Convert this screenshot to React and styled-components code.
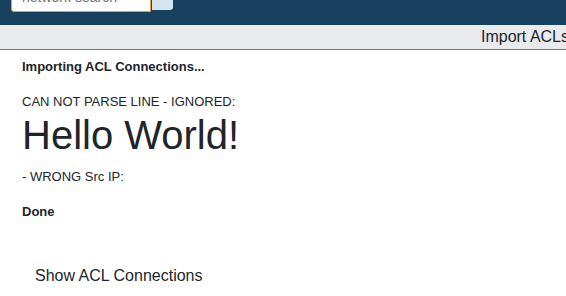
import React from 'react';
import styled, { createGlobalStyle } from 'styled-components';

const GlobalStyle = createGlobalStyle`
  html, body {
    margin: 0;
    padding: 0;
    background: #fff;
    overflow: hidden;
  }
  body {
    font-family: "Liberation Sans", Arial, sans-serif;
    color: #212529;
  }
`;

const Navbar = styled.nav`
  height: 25px;
  background: #17415f;
  padding-left: 11px;
  display: flex;
  align-items: flex-start;
  overflow: hidden;
`;

const SearchGroup = styled.form`
  display: flex;
  margin-top: -19px;
  height: 31px;
`;

const SearchInput = styled.input`
  box-sizing: border-box;
  width: 140px;
  height: 100%;
  padding: 0 10px;
  font-family: "Liberation Sans", Arial, sans-serif;
  font-size: 14px;
  color: #495057;
  background: #fff;
  border: 1px solid #f0a21f;
  border-radius: 0 0 0 3px;
  outline: none;

  &::placeholder {
    color: #6c757d;
  }
`;

const SearchButton = styled.button`
  width: 21px;
  height: 29px;
  margin-left: 1px;
  padding: 0;
  border: none;
  background: #d4e4f1;
  border-radius: 0 0 3px 0;
`;

const ActionBar = styled.div`
  height: 24px;
  background: #e9eaec;
  border-bottom: 1px solid #8c6d3c;
  display: flex;
  justify-content: flex-end;
  align-items: center;
`;

const ActionLink = styled.span`
  font-size: 16px;
  line-height: 24px;
  margin-right: -3px;
  white-space: nowrap;
  color: #212529;
`;

const Content = styled.main`
  padding: 8px 0 0 22px;
`;

const Line = styled.div`
  font-size: 13px;
  line-height: 18px;
  font-weight: ${p => (p.$bold ? 700 : 400)};
  margin-top: ${p => p.$gap || 0}px;
`;

const Heading = styled.h1`
  margin: 0;
  font-size: 40px;
  line-height: 48px;
  font-weight: 400;
`;

const ShowButton = styled.button`
  margin: 43px 0 0 0;
  padding: 0 13px;
  border: none;
  background: transparent;
  font-family: "Liberation Sans", Arial, sans-serif;
  font-size: 16px;
  line-height: 24px;
  color: #212529;
`;

export default function App() {
  return (
    <>
      <GlobalStyle />
      <Navbar>
        <SearchGroup onSubmit={e => e.preventDefault()}>
          <SearchInput placeholder="network search" />
          <SearchButton type="submit" />
        </SearchGroup>
      </Navbar>
      <ActionBar>
        <ActionLink>Import ACLs</ActionLink>
      </ActionBar>
      <Content>
        <Line $bold>Importing ACL Connections...</Line>
        <Line $gap={17}>CAN NOT PARSE LINE - IGNORED:</Line>
        <Heading>Hello World!</Heading>
        <Line $gap={9}>- WRONG Src IP:</Line>
        <Line $bold $gap={17}>Done</Line>
        <ShowButton>Show ACL Connections</ShowButton>
      </Content>
    </>
  );
}
